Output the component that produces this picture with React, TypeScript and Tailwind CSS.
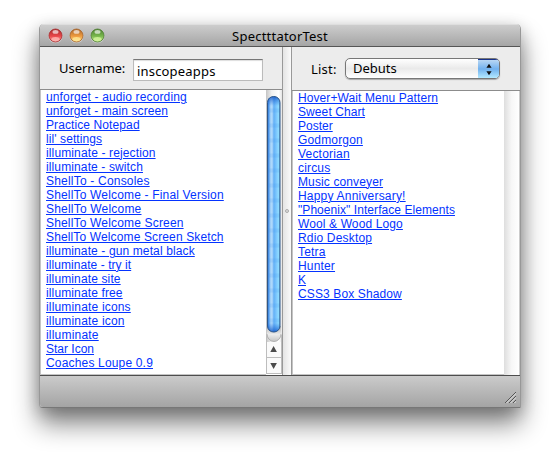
const shots: [string, string][] = [
  ['unforget - audio recording', 'tracking-[0.13px]'],
  ['unforget - main screen', 'tracking-[0.09px]'],
  ['Practice Notepad', 'tracking-[0.1px]'],
  ["lil' settings", 'tracking-[0.09px]'],
  ['illuminate - rejection', 'tracking-[0.13px]'],
  ['illuminate - switch', 'tracking-[0.12px]'],
  ['ShellTo - Consoles', 'tracking-[0.2px]'],
  ['ShellTo Welcome - Final Version', 'tracking-[0.17px]'],
  ['ShellTo Welcome', 'tracking-[0.2px]'],
  ['ShellTo Welcome Screen', 'tracking-[0.17px]'],
  ['ShellTo Welcome Screen Sketch', 'tracking-[0.13px]'],
  ['illuminate - gun metal black', 'tracking-[0.12px]'],
  ['illuminate - try it', 'tracking-[0.06px]'],
  ['illuminate site', 'tracking-[0.13px]'],
  ['illuminate free', 'tracking-[0.13px]'],
  ['illuminate icons', 'tracking-[0.17px]'],
  ['illuminate icon', 'tracking-[0.17px]'],
  ['illuminate', 'tracking-[0.2px]'],
  ['Star Icon', ''],
  ['Coaches Loupe 0.9', 'tracking-[0.17px]'],
];

const debuts: [string, string][] = [
  ['Hover+Wait Menu Pattern', 'tracking-[0.09px]'],
  ['Sweet Chart', 'tracking-[0.09px]'],
  ['Poster', ''],
  ['Godmorgon', 'tracking-[0.17px]'],
  ['Vectorian', 'tracking-[0.2px]'],
  ['circus', 'tracking-[0.17px]'],
  ['Music conveyer', 'tracking-[0.12px]'],
  ['Happy Anniversary!', 'tracking-[0.2px]'],
  ['"Phoenix" Interface Elements', 'tracking-[0.06px]'],
  ['Wool & Wood Logo', 'tracking-[0.12px]'],
  ['Rdio Desktop', 'tracking-[0.17px]'],
  ['Tetra', 'tracking-[0.17px]'],
  ['Hunter', 'tracking-[0.17px]'],
  ['K', ''],
  ['CSS3 Box Shadow', 'tracking-[0.12px]'],
];

function Links({ items }: { items: [string, string][] }) {
  return (
    <ul className="min-w-0 flex-1 border-b border-l border-[#c4c4c4] pl-[5px] font-['Liberation_Sans',Arial,sans-serif] text-[12px] leading-[14px] text-[#0433ff]">
      {items.map(([title, tracking]) => (
        <li key={title} className="h-[14px] whitespace-nowrap">
          <a className={`underline decoration-1 underline-offset-1 ${tracking}`}>{title}</a>
        </li>
      ))}
    </ul>
  );
}

function Light({ id, dark, mid, glow }: { id: string; dark: string; mid: string; glow: string }) {
  return (
    <svg width="15" height="16" viewBox="0 0 15 16">
      <defs>
        <linearGradient id={id} x1="0" y1="0" x2="0" y2="1">
          <stop offset="0" stopColor={dark} />
          <stop offset="0.55" stopColor={mid} />
          <stop offset="1" stopColor={glow} />
        </linearGradient>
      </defs>
      <circle cx="7.5" cy="8.3" r="7" fill="#ffffff" fillOpacity="0.35" />
      <circle cx="7.5" cy="7.5" r="6.5" fill={`url(#${id})`} stroke={dark} strokeOpacity="0.8" strokeWidth="1" />
      <ellipse cx="7.5" cy="3.9" rx="3" ry="1.9" fill="#fff" fillOpacity="0.65" />
      <ellipse cx="7.5" cy="11" rx="4" ry="2" fill={glow} fillOpacity="0.8" />
    </svg>
  );
}

function Scroller() {
  return (
    <svg width="16" height="284" viewBox="0 0 16 284">
      <defs>
        <linearGradient id="track">
          <stop offset="0" stopColor="#c4c4c4" />
          <stop offset="0.35" stopColor="#f0f0f0" />
          <stop offset="0.8" stopColor="#fff" />
          <stop offset="1" stopColor="#e4e4e4" />
        </linearGradient>
        <linearGradient id="thumb">
          <stop offset="0" stopColor="#2468cf" />
          <stop offset="0.12" stopColor="#5aa2ee" />
          <stop offset="0.28" stopColor="#b5dcfb" />
          <stop offset="0.44" stopColor="#98cbf9" />
          <stop offset="0.5" stopColor="#62aff6" />
          <stop offset="0.78" stopColor="#86d0ff" />
          <stop offset="0.92" stopColor="#90dfff" />
          <stop offset="1" stopColor="#4b8dca" />
        </linearGradient>
        <linearGradient id="cap" x1="0" y1="0" x2="0" y2="1">
          <stop offset="0" stopColor="#1152c2" stopOpacity="0.8" />
          <stop offset="0.04" stopColor="#1e6bdc" stopOpacity="0" />
          <stop offset="0.96" stopColor="#1e6bdc" stopOpacity="0" />
          <stop offset="1" stopColor="#1459c8" stopOpacity="0.85" />
        </linearGradient>
        <linearGradient id="lip" x1="0" y1="0" x2="0" y2="1">
          <stop offset="0" stopColor="#b0b0b0" />
          <stop offset="0.55" stopColor="#ececec" />
          <stop offset="1" stopColor="#c4c4c4" />
        </linearGradient>
        <pattern id="ripple" width="13" height="15" patternUnits="userSpaceOnUse">
          <rect y="3" width="13" height="5" fill="#2e86e6" fillOpacity="0.08" />
          <rect y="4" width="13" height="3" fill="#2e86e6" fillOpacity="0.08" />
        </pattern>
      </defs>
      <rect width="16" height="284" fill="url(#track)" />
      <rect x="1" y="252" width="14" height="31" fill="#fafafa" />
      <path d="M1 236h14v8a7 7.5 0 0 1-14 0z" fill="url(#lip)" />
      <path d="M1 244a7 7.5 0 0 0 14 0" fill="none" stroke="#a6a6a6" strokeWidth="0.8" />
      <rect x="1.5" y="6.5" width="12.5" height="235.5" rx="6" fill="url(#thumb)" />
      <rect x="1.5" y="6.5" width="12.5" height="235.5" rx="6" fill="url(#ripple)" />
      <rect x="1.5" y="6.5" width="12.5" height="235.5" rx="6" fill="url(#cap)" stroke="#2e5687" strokeWidth="1" />
      <path d="M0 267.5h16M0 283.5h16M0.5 245v39M15.5 245v39" stroke="#bdbdbd" />
      <path d="M7.6 256l3.3 6H4.3zM7.6 279l3.3-6H4.3z" fill="#4b4b4b" />
    </svg>
  );
}

export default function App() {
  return (
    <main className="h-[462px] w-[560px] overflow-hidden bg-white pt-6 pl-[39px]">
      <section className="flex h-[384px] w-[482px] flex-col overflow-hidden rounded-t-[5px] rounded-bl-[4px] rounded-br-[1px] border-x border-b border-[#989898] border-b-[#777] bg-[#ececec] shadow-[0_16px_26px_rgba(0,0,0,0.48),0_4px_16px_rgba(0,0,0,0.2)]">
        <header className="grid h-[23px] shrink-0 grid-cols-[190px_1fr_190px] border-t border-b border-t-[#dedede] border-b-[#555] bg-linear-to-b from-[#cdcdcd] to-[#a5a5a5]">
          <div className="flex gap-[6px] pt-[3px] pl-[8px]">
            <Light id="close" dark="#a52b2d" mid="#e9474a" glow="#ffb4b0" />
            <Light id="minimize" dark="#a8642a" mid="#ee9b3f" glow="#ffe793" />
            <Light id="zoom" dark="#4d7e31" mid="#79b84d" glow="#d3f59b" />
          </div>
          <h1 className="text-center font-['Noto_Sans',sans-serif] text-[13px] leading-[22px] tracking-[0.22px] whitespace-nowrap text-black">SpectttatorTest</h1>
        </header>

        <div className="flex h-[328px] shrink-0">
          <div className="flex w-[243px] flex-col border-r border-[#999]">
            <div className="flex h-[43px] shrink-0 border-b border-[#8c8c8c] pl-[19px]">
              <label className="w-[74px] pt-[10px] font-['Noto_Sans',sans-serif] text-[13px] leading-[22px] tracking-[-0.05px] whitespace-nowrap">Username:</label>
              <div className="mt-[12px] h-[22px] w-[130px] border border-[#bbb] border-t-[#777] bg-white pl-[3px] font-['Noto_Sans',sans-serif] text-[13px] leading-[22px] tracking-[0.18px] shadow-[inset_0_1px_1px_#ddd]">inscopeapps</div>
            </div>
            <div className="flex h-[285px] bg-white">
              <Links items={shots} />
              <Scroller />
            </div>
          </div>
          <div className="flex w-[8px] items-center justify-center bg-linear-to-r from-[#e4e4e4] to-[#fafafa]">
            <i className="mb-px size-[4px] rounded-full border border-[#aaa] bg-[#ddd]" />
          </div>
          <div className="flex w-[229px] flex-col border-l border-[#999]">
            <div className="flex h-[44px] shrink-0 border-b border-[#8c8c8c] pl-[19px]">
              <label className="w-[34px] pt-[11px] font-['Noto_Sans',sans-serif] text-[13px] leading-[22px] tracking-[0.2px] whitespace-nowrap">List:</label>
              <div className="mt-[11px] flex h-[21px] w-[155px] overflow-hidden rounded-[5px] border border-[#777] bg-linear-to-b from-white via-[#eaeaea] to-white shadow-[0_1px_1px_#aaa]">
                <span className="flex-1 pl-[7px] font-['Noto_Sans',sans-serif] text-[13px] leading-[19px]">Debuts</span>
                <span className="flex w-[21px] items-center justify-center border-t border-[#18328a] bg-linear-to-b from-[#b9d7f3] via-[#71b1ee] to-[#b4eaff]">
                  <svg width="6" height="13" viewBox="0 0 6 13"><path d="M3 0.7L5.6 4.7H.4zM3 12.3L5.6 8.3H.4z" fill="#111" /></svg>
                </span>
              </div>
            </div>
            <div className="flex h-[284px] bg-white">
              <Links items={debuts} />
              <div className="w-4 border-r border-[#ccc] bg-linear-to-r from-[#dedede] via-[#f7f7f7] to-white" />
            </div>
          </div>
        </div>

        <footer className="flex flex-1 items-end justify-end border-t border-[#4d4d4d] bg-linear-to-b from-[#cbcbcb] to-[#a4a4a4] pr-[4px] pb-[4px]">
          <svg width="11" height="11" viewBox="0 0 11 11" fill="none">
            <path d="M1 11.5L11.5 1M5 11.5L11.5 5M9 11.5L11.5 9" stroke="#e2e2e2" />
            <path d="M0 11L11 0M4 11L11 4M8 11L11 8" stroke="#555" />
          </svg>
        </footer>
      </section>
    </main>
  );
}
